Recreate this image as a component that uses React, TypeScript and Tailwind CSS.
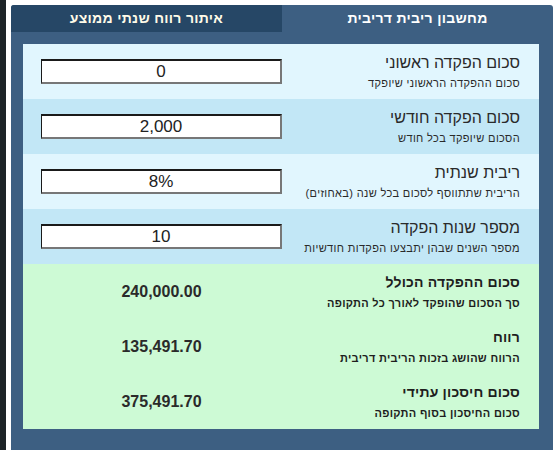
import React from "react"

interface InputRow {
  title: string
  hint: string
  value: string
  bg: string
}

interface ResultRow {
  title: string
  hint: string
  value: string
}

const inputs: InputRow[] = [
  { title: "סכום הפקדה ראשוני", hint: "סכום ההפקדה הראשוני שיופקד", value: "0", bg: "bg-[#e1f6fe]" },
  { title: "סכום הפקדה חודשי", hint: "הסכום שיופקד בכל חודש", value: "2,000", bg: "bg-[#c2e7f6]" },
  { title: "ריבית שנתית", hint: "הריבית שתתווסף לסכום בכל שנה (באחוזים)", value: "8%", bg: "bg-[#e1f6fe]" },
  { title: "מספר שנות הפקדה", hint: "מספר השנים שבהן יתבצעו הפקדות חודשיות", value: "10", bg: "bg-[#c2e7f6]" },
]

const results: ResultRow[] = [
  { title: "סכום ההפקדה הכולל", hint: "סך הסכום שהופקד לאורך כל התקופה", value: "240,000.00" },
  { title: "רווח", hint: "הרווח שהושג בזכות הריבית דריבית", value: "135,491.70" },
  { title: "סכום חיסכון עתידי", hint: "סכום החיסכון בסוף התקופה", value: "375,491.70" },
]

export default function App() {
  return (
    <div className="w-[556px] h-[450px] bg-white flex overflow-hidden font-['Liberation_Sans',Arial,sans-serif]">
      <div className="w-[6px] bg-[#1d2327]" />
      <div className="flex-1 pl-[5px] pt-[5px] pr-[3px] flex">
        <div dir="rtl" className="flex-1 bg-[#3d5f82] flex flex-col rounded-tl-[3px] rounded-tr-[3px]">
          {/* Tabs */}
          <div className="h-[27px] flex">
            <div className="w-[271px] flex items-center justify-center text-white font-bold text-[14px] tracking-[0.3px]">
              מחשבון ריבית דריבית
            </div>
            <div className="flex-1 bg-[#264766] rounded-tl-[3px] flex items-center justify-center text-[#fffbe8] font-bold text-[14px] tracking-[0.3px]">
              איתור רווח שנתי ממוצע
            </div>
          </div>

          {/* Content */}
          <div className="pt-[12px] pr-[14px] pl-[12px]">
            {inputs.map((row) => (
              <div key={row.title} className={`h-[55px] flex items-center justify-between ${row.bg}`}>
                <div className="pr-[19px] flex flex-col gap-[5px] text-[#2a2a2a]">
                  <div className="text-[16px] leading-[18px]">{row.title}</div>
                  <div className="text-[11px] leading-[13px] tracking-[0.35px]">{row.hint}</div>
                </div>
                <div className="pl-[18px]">
                  <div className="w-[241px] h-[25px] bg-white border-t-2 border-l border-r-2 border-b-2 border-t-[#1a1a1a] border-l-[#1a1a1a] border-r-[#777] border-b-[#777] flex items-center justify-center text-[17px] text-[#222]">
                    {row.value}
                  </div>
                </div>
              </div>
            ))}

            <div className="bg-[#cdfad5]">
              {results.map((row) => (
                <div key={row.title} className="h-[55px] flex items-center justify-between">
                  <div className="pr-[19px] flex flex-col gap-[7px] text-[#1e1e1e]">
                    <div className="text-[14px] leading-[16px] font-bold tracking-[0.2px]">{row.title}</div>
                    <div className="text-[11px] leading-[13px] font-bold tracking-[0.3px]">{row.hint}</div>
                  </div>
                  <div className="pl-[18px]">
                    <div className="w-[241px] text-center font-bold text-[16px] text-[#2a2a2a]">{row.value}</div>
                  </div>
                </div>
              ))}
            </div>
          </div>
        </div>
      </div>
    </div>
  )
}
